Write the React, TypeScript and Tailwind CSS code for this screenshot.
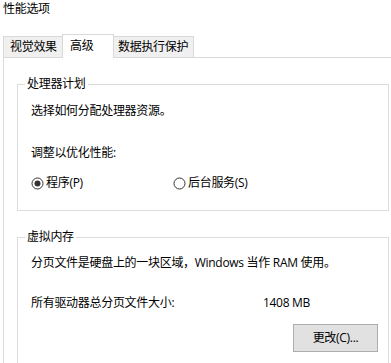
import React from "react";

function Radio({ checked }: { checked: boolean }) {
  return (
    <svg width="13" height="13" viewBox="0 0 13 13" className="shrink-0">
      <circle cx="6.5" cy="6.5" r="5.5" fill="#fff" stroke="#333" strokeWidth="1" />
      {checked && <circle cx="6.5" cy="6.5" r="3" fill="#333" />}
    </svg>
  );
}

export default function App() {
  return (
    <div
      className="w-[391px] h-[363px] overflow-hidden bg-white text-[12px] leading-[16px] text-black tracking-[-0.3px]"
      style={{ fontFamily: '"Open Sans", "Noto Sans CJK SC", sans-serif' }}
    >
      <div className="pl-[3px] pt-[1px] h-[34px]">性能选项</div>
      <div className="flex items-end pl-[3px] h-[23px]">
        <div className="h-[21px] w-[60px] border border-b-0 border-[#d9d9d9] bg-[#f0f0f0] pl-[6px] pt-[2px]">
          视觉效果
        </div>
        <div className="relative z-10 -mb-px h-[24px] w-[52px] -ml-px border border-b-0 border-[#d9d9d9] bg-white pl-[7px] pt-[3px]">
          高级
        </div>
        <div className="h-[21px] w-[81px] -ml-px border border-b-0 border-[#d9d9d9] bg-[#f0f0f0] pl-[4px] pt-[2px]">
          数据执行保护
        </div>
      </div>
      <div className="ml-[3px] border-t border-l border-[#d9d9d9] pt-[18px] pl-[13px] pr-[2px] h-[400px]">
        <fieldset className="border border-[#dcdcdc] px-[13px] pb-[19px] m-0 min-w-0">
          <legend className="ml-[-6px] px-[2px]">处理器计划</legend>
          <div className="mt-[11px]">选择如何分配处理器资源。</div>
          <div className="mt-[26px]">调整以优化性能:</div>
          <div className="mt-[14px] flex items-center">
            <div className="w-[142px] flex items-center gap-[2px]">
              <Radio checked />
              <span>程序(P)</span>
            </div>
            <div className="flex items-center gap-[2px]">
              <Radio checked={false} />
              <span>后台服务(S)</span>
            </div>
          </div>
        </fieldset>
        <fieldset className="mt-[18px] border border-[#dcdcdc] px-[13px] pb-[19px] m-0 min-w-0">
          <legend className="ml-[-6px] px-[2px]">虚拟内存</legend>
          <div className="mt-[10px]">分页文件是硬盘上的一块区域，Windows 当作 RAM 使用。</div>
          <div className="mt-[24px] flex">
            <div className="w-[232px]">所有驱动器总分页文件大小:</div>
            <div>1408 MB</div>
          </div>
          <div className="mt-[13px] flex justify-end">
            <button className="w-[85px] h-[28px] bg-[#e1e1e1] border border-[#adadad] mr-[-3px] text-[12px]">
              更改(C)...
            </button>
          </div>
        </fieldset>
      </div>
    </div>
  );
}
